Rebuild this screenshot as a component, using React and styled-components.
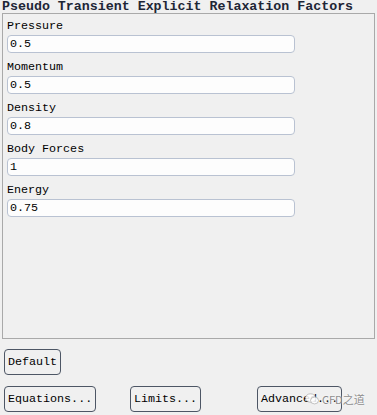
import React from "react";
import styled, { createGlobalStyle } from "styled-components";

const Global = createGlobalStyle`
  html, body { margin: 0; padding: 0; background: #f0f0f0; }
  body { font-family: "Liberation Mono", "DejaVu Sans Mono", monospace; }
  * { box-sizing: border-box; }
`;

const Page = styled.div`
  width: 377px;
  height: 415px;
  position: relative;
  background: #f0f0f0;
  overflow: hidden;
`;

const Title = styled.div`
  height: 13px;
  padding-left: 2px;
  font-family: "Liberation Mono", monospace;
  font-weight: bold;
  font-size: 13.3px;
  line-height: 13px;
  color: #1e2636;
  white-space: nowrap;
`;

const Panel = styled.div`
  margin: 0 2px;
  height: 326px;
  border: 1px solid #a9a9a9;
  background: #f0f0f0;
  padding: 4px 0 0 4px;
  display: flex;
  flex-direction: column;
`;

const Field = styled.div`
  display: flex;
  flex-direction: column;
  margin-bottom: 6px;
`;

const Label = styled.div`
  height: 17px;
  line-height: 17px;
  font-size: 11.7px;
  color: #000;
  white-space: nowrap;
`;

const Input = styled.input`
  width: 288px;
  height: 18px;
  margin: 0;
  padding: 0 0 0 2px;
  border: 1px solid #b9c2d2;
  border-radius: 4px;
  background: #fdfdfd;
  font-family: "Liberation Mono", monospace;
  font-size: 11.7px;
  color: #000;
  outline: none;
`;

const ButtonRow = styled.div`
  display: grid;
  grid-template-columns: ${(p) => p.$cols};
  padding-left: 4px;
  margin-top: ${(p) => p.$top}px;
  align-items: start;
`;

const Button = styled.button`
  justify-self: start;
  height: 26px;
  margin: 0;
  padding: 0 3px;
  border: 1px solid #4d5665;
  border-radius: 4px;
  background: #f0f0f0;
  font-family: "Liberation Mono", monospace;
  font-size: 11.7px;
  color: #000;
  white-space: nowrap;
  cursor: default;
`;

const Watermark = styled.div`
  position: absolute;
  left: 305px;
  top: 391px;
  display: flex;
  align-items: center;
  gap: 3px;
  color: rgba(120, 120, 120, 0.85);
  font-family: "Noto Sans CJK SC", "DejaVu Sans", sans-serif;
  font-size: 11px;
  text-shadow: 0 0 2px #fff;
  pointer-events: none;
`;

const fields = [
  ["Pressure", "0.5"],
  ["Momentum", "0.5"],
  ["Density", "0.8"],
  ["Body Forces", "1"],
  ["Energy", "0.75"],
];

export default function App() {
  return (
    <Page>
      <Global />
      <Title>Pseudo Transient Explicit Relaxation Factors</Title>
      <Panel>
        {fields.map(([l, v]) => (
          <Field key={l}>
            <Label>{l}</Label>
            <Input defaultValue={v} />
          </Field>
        ))}
      </Panel>
      <ButtonRow $cols="auto" $top={10}>
        <Button>Default</Button>
      </ButtonRow>
      <ButtonRow $cols="126px 127px auto" $top={11}>
        <Button>Equations...</Button>
        <Button>Limits...</Button>
        <Button>Advanced...</Button>
      </ButtonRow>
      <Watermark>
        <svg width="14" height="12" viewBox="0 0 14 12">
          <ellipse cx="5.5" cy="5" rx="5" ry="4.2" fill="rgba(255,255,255,0.85)" stroke="rgba(150,150,150,0.7)" strokeWidth="0.8" />
          <ellipse cx="9.5" cy="7.5" rx="4" ry="3.4" fill="rgba(255,255,255,0.85)" stroke="rgba(150,150,150,0.7)" strokeWidth="0.8" />
        </svg>
        <span>CFD之道</span>
      </Watermark>
    </Page>
  );
}
